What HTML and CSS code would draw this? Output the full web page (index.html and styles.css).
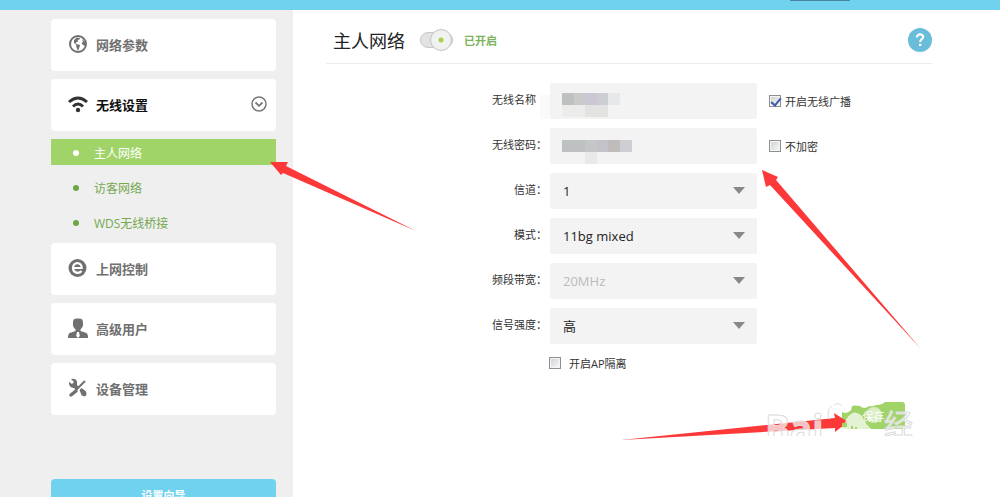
FILE: index.html
```
<!DOCTYPE html>
<html lang="zh-CN">
<head>
    <meta charset="UTF-8">
    <meta name="viewport" content="width=device-width, initial-scale=1.0">
    <title>主人网络</title>
    <link rel="stylesheet" href="styles.css">
</head>
<body>
<header class="topbar"><span class="topbar-tab"></span></header>
<div class="layout">
    <nav class="sidebar">
        <a class="menu-card" href="#network">
            <svg class="menu-icon" viewBox="0 0 20 20">
                <circle cx="10" cy="10" r="8" fill="none" stroke="#707070" stroke-width="2"/>
                <path fill="#707070" d="M6 6l3-2.500 3 .5-.5 1.500-2 .5 1 1.500-2 .5-1 1.500 1 .5 3.500 1-.5 2-1.500 4-1.500-3.500L8 10.500 6 9zM14 5l3 3v4l-2.500-1.500L13.500 9l1.500-1z"/>
            </svg>
            <span>网络参数</span>
        </a>
        <a class="menu-card current" href="#wireless">
            <svg class="menu-icon" viewBox="0 0 20 20">
                <path fill="none" stroke="#333" stroke-width="3" d="M1 8Q10 0 19 8"/>
                <path fill="none" stroke="#333" stroke-width="3" d="M5 12.500Q10 7.500 15 12.500"/>
                <circle cx="10" cy="16" r="2.200" fill="#333"/>
            </svg>
            <span>无线设置</span>
            <svg class="menu-toggle" viewBox="0 0 16 16">
                <circle cx="8" cy="8" r="7" fill="none" stroke="#777" stroke-width="1.500"/>
                <path fill="none" stroke="#777" stroke-width="1.800" d="M4.500 6.500L8 9.800l3.500-3.300"/>
            </svg>
        </a>
        <ul class="submenu">
            <li><a class="active" href="#host">主人网络</a></li>
            <li><a href="#guest">访客网络</a></li>
            <li><a href="#wds">WDS无线桥接</a></li>
        </ul>
        <a class="menu-card" href="#control">
            <svg class="menu-icon" viewBox="0 0 20 20">
                <circle cx="9.500" cy="10" r="9" fill="#707070"/>
                <path fill="none" stroke="#fff" stroke-width="2.200" d="M5.500 10H13.700C13.700 3.500 5 3.500 5 10C5 15.500 11 16 13.500 13"/>
            </svg>
            <span>上网控制</span>
        </a>
        <a class="menu-card" href="#advanced">
            <svg class="menu-icon" viewBox="0 0 20 20">
                <path fill="#707070" d="M5 5C5 1 6.500 .5 10 .5S15 1 15 5C15.500 9 13.500 10 12.500 11.500V13l6 2q1.500 1 1.500 5H0q0-4 1.500-5l6-2v-1.500C6.500 10 4.500 9 5 5z"/>
                <path fill="#fff" d="M9 14h2l.8 4L10 20l-1.800-2z"/>
            </svg>
            <span>高级用户</span>
        </a>
        <a class="menu-card" href="#device">
            <svg class="menu-icon" viewBox="0 0 20 20">
                <path fill="#707070" d="M3 1q4-1 6 2v4l2 2-3 3-2-2q-4 0-5-4V4l3 2 2-2zM11.500 12l2-2 4 3q2 3 0 5-2 1-4-1z"/>
                <path fill="none" stroke="#707070" stroke-width="3.500" stroke-linecap="round" d="M3 17l5-4"/>
                <path fill="none" stroke="#707070" stroke-width="2" d="M7 13L17 3"/>
            </svg>
            <span>设备管理</span>
        </a>
        <button class="wizard" type="button">设置向导</button>
    </nav>

    <main class="content">
        <div class="title-row">
            <h1>主人网络</h1>
            <label class="switch">
                <input type="checkbox" aria-label="主人网络" checked>
                <span>已开启</span>
            </label>
            <button class="help" type="button" aria-label="帮助">
                <svg viewBox="0 0 24 24">
                    <path fill="none" stroke="#fff" stroke-width="2.200" d="M8.900 9.500C8.700 5.500 15.500 5.500 15.200 9C15 11 12.200 11.200 12.200 14"/>
                    <path fill="#fff" d="M11 15.700h2.400V18H11z"/>
                </svg>
            </button>
        </div>

        <form class="settings">
            <div class="row">
                <label class="row-label plain" for="ssid">无线名称</label>
                <div class="field">
                    <input type="text" id="ssid" name="ssid">
                    <svg class="mask" viewBox="0 0 92 36">
                        <path fill="#fafafa" d="M0 12h10v24H0z"/>
                        <path fill="#bdc1bf" d="M22 10h12v12H22z"/>
                        <path fill="#cacaca" d="M34 10h11v12H34z"/>
                        <path fill="#cac6d4" d="M45 10h12v12H45z"/>
                        <path fill="#cdced2" d="M57 10h11v12H57z"/>
                        <path fill="#e6e8ea" d="M68 10h12v12H68z"/>
                        <path fill="#ececeb" d="M22 22h23v12H22z"/>
                        <path fill="#e3e3e1" d="M45 22h23v12H45z"/>
                    </svg>
                </div>
                <label class="check"><input type="checkbox" name="broadcast" checked>开启无线广播</label>
            </div>
            <div class="row">
                <label class="row-label" for="password">无线密码：</label>
                <div class="field">
                    <input type="text" id="password" name="password">
                    <svg class="mask" viewBox="0 0 92 36">
                        <path fill="#bdc1c1" d="M22 12h23v12H22z"/>
                        <path fill="#c4c6c8" d="M45 12h12v12H45z"/>
                        <path fill="#c2c2c8" d="M57 12h11v12H57z"/>
                        <path fill="#c0bcbc" d="M68 12h12v12H68z"/>
                        <path fill="#cdcfd4" d="M80 12h12v12H80z"/>
                        <path fill="#e9e9e9" d="M45 24h12v12H45z"/>
                    </svg>
                </div>
                <label class="check"><input type="checkbox" name="open">不加密</label>
            </div>
            <div class="row">
                <label class="row-label" for="channel">信道：</label>
                <div class="field select">
                    <select id="channel" name="channel"><option>1</option></select>
                </div>
            </div>
            <div class="row">
                <label class="row-label" for="mode">模式：</label>
                <div class="field select">
                    <select id="mode" name="mode"><option>11bg mixed</option></select>
                </div>
            </div>
            <div class="row">
                <label class="row-label" for="bandwidth">频段带宽：</label>
                <div class="field select">
                    <select id="bandwidth" name="bandwidth" disabled><option>20MHz</option></select>
                </div>
            </div>
            <div class="row">
                <label class="row-label" for="power">信号强度：</label>
                <div class="field select">
                    <select id="power" name="power"><option>高</option></select>
                </div>
            </div>
            <label class="check isolate"><input type="checkbox" name="isolate">开启AP隔离</label>
            <button class="save" type="submit">保存</button>
        </form>
    </main>
</div>

<svg class="overlay" width="1000" height="497" viewBox="0 0 1000 497">
    <defs>
        <clipPath id="mark-clip"><path d="M760 395h160v41H760z"/></clipPath>
    </defs>
    <g fill="#fc3838">
        <path d="M270 162L288 162L286 166L416 231L283 173L281 175z"/>
        <path d="M762 170L778 177L776 180L921 349L770 185L766 187z"/>
        <path d="M848 422L834 413L835 418L621 440L835 428L835 432z"/>
    </g>
    <g clip-path="url(#mark-clip)">
        <g class="mark">
            <text class="mark-latin" x="765" y="442">Bai</text>
            <text class="mark-han" x="884" y="436">经</text>
        </g>
        <g fill="#fff" fill-opacity=".7">
            <path d="M837 436Q843 428 847 418Q854 408 862 416Q866 426 875 432V436z"/>
            <circle cx="874" cy="415" r="8" fill-opacity=".6"/>
        </g>
        <path fill="#fff" d="M840 401h46q-3 4-10 4-4 2-7 1-5 4-9 0-5-1-8 0 0 7-8 7l-4-3z"/>
        <path fill="none" stroke="#ddd" d="M829 419q-3-9 3-13M834 405q5-3 8 1"/>
        <path fill="#a0d468" d="M842 423h5v4h-5zM851 426h2v3h-2zM855 427h2v2h-2z"/>
    </g>
</svg>
</body>
</html>
```
FILE: styles.css
```
* {
    box-sizing: border-box;
}

body {
    display: flex;
    flex-direction: column;
    height: 100vh;
    margin: 0;
    overflow: hidden;
    background-color: #fff;
    color: #333;
    font-family: "Open Sans", "Noto Sans CJK SC", sans-serif;
    font-size: 11px;
}

a {
    color: inherit;
    text-decoration: none;
}

button,
input,
select {
    margin: 0;
    border: none;
    font-family: inherit;
}

.topbar {
    flex: none;
    height: 10px;
    padding-right: 150px;
    background-color: #70d2ef;
}

.topbar-tab {
    display: block;
    width: 60px;
    height: 1px;
    margin-left: auto;
    background-color: #4a86a3;
}

.layout {
    display: flex;
    flex: 1;
}

/* left menu */
.sidebar {
    display: flex;
    flex: none;
    flex-direction: column;
    gap: 8px;
    width: 293px;
    padding: 9px 17px 0 51px;
    background-color: #efefef;
}

.menu-card {
    display: flex;
    flex: none;
    align-items: center;
    gap: 8px;
    height: 52px;
    padding: 0 9px 2px 17px;
    border-radius: 4px;
    background-color: #fff;
    color: #707070;
    font-size: 13px;
    font-weight: bold;
}

.menu-card.current {
    color: #111;
}

.menu-icon {
    width: 20px;
    height: 20px;
}

.menu-toggle {
    width: 16px;
    height: 16px;
    margin-left: auto;
}

.submenu {
    display: flex;
    flex-direction: column;
    gap: 9px;
    margin: 0;
    padding: 0;
    list-style: none;
}

.submenu a {
    display: flex;
    align-items: center;
    gap: 15px;
    height: 26px;
    padding: 2px 0 0 22px;
    color: #76a94f;
    font-size: 12px;
}

.submenu a::before {
    content: "";
    width: 6px;
    height: 6px;
    border-radius: 50%;
    background-color: #6fa644;
}

.submenu a.active {
    background-color: #a0d468;
    color: #fff;
}

.submenu a.active::before {
    background-color: #fff;
}

.wizard {
    flex: none;
    height: 32px;
    margin-top: 56px;
    border-radius: 4px;
    background-color: #70d2ef;
    color: #fff;
    font-size: 11px;
    font-weight: bold;
}

/* right part */
.content {
    flex: 1;
    padding: 0 68px 0 33px;
}

.title-row {
    display: flex;
    align-items: center;
    height: 54px;
    padding: 6px 0 0 7px;
    border-bottom: 1px solid #ececec;
}

h1 {
    margin: 0 15px 0 0;
    color: #222;
    font-size: 18px;
    font-weight: normal;
}

.switch {
    display: flex;
    align-items: center;
    gap: 11px;
    color: #7db35b;
    font-weight: bold;
}

.switch input {
    display: flex;
    align-items: center;
    justify-content: flex-end;
    width: 33px;
    height: 16px;
    border: 1px solid #c8c8c8;
    border-radius: 8px;
    appearance: none;
    background-color: #e2e2e2;
}

.switch input::before {
    content: "";
    flex: none;
    width: 20px;
    height: 20px;
    border: 1px solid #c4c4c4;
    border-radius: 50%;
    background: radial-gradient(circle, #a8d04c 2px, #f1f1f1 3px);
}

.help {
    width: 24px;
    height: 24px;
    margin-left: auto;
    padding: 0;
    border-radius: 50%;
    background-color: #69bddb;
}

.help svg {
    display: block;
}

.settings {
    display: flex;
    flex-direction: column;
    gap: 9px;
    padding-top: 19px;
}

.row {
    display: flex;
    align-items: center;
}

.row-label {
    width: 221px;
    padding-bottom: 4px;
    text-align: right;
}

.row-label.plain {
    padding-right: 11px;
}

.field {
    position: relative;
    width: 207px;
    height: 36px;
    margin: 0 12px 0 3px;
}

.field input,
.field select {
    width: 100%;
    height: 100%;
    padding: 0 30px 0 13px;
    border-radius: 2px;
    appearance: none;
    background-color: #f3f3f3;
    color: #222;
    font-size: 13px;
    opacity: 1;
}

.field select:disabled {
    color: #bbb;
}

.select::after {
    content: "";
    position: absolute;
    top: 14px;
    right: 12px;
    border: 6px solid transparent;
    border-top: 7px solid #888;
    border-bottom: none;
    pointer-events: none;
}

.mask {
    position: absolute;
    top: 0;
    left: -10px;
    width: 92px;
    height: 36px;
}

.check {
    display: flex;
    align-items: center;
    gap: 4px;
}

.check input {
    width: 12px;
    height: 12px;
    border: 1px solid #8e8f8f;
    appearance: none;
    background: linear-gradient(135deg, #ccd0d5, #fafafa);
    box-shadow: inset 0 0 0 1px #f4f4f4;
}

.check input:checked::before {
    content: "";
    display: block;
    width: 4px;
    height: 8px;
    margin: 0 3px;
    border: solid #3f5aa6;
    border-width: 0 2px 2px 0;
    transform: rotate(40deg);
}

.isolate {
    gap: 8px;
    height: 20px;
    padding-left: 223px;
}

.save {
    align-self: flex-end;
    width: 63px;
    height: 27px;
    margin: 20px 27px 0 0;
    border-radius: 3px;
    background-color: #a0d468;
    color: #fff;
    font-size: 11px;
}

/* arrows and watermark */
.overlay {
    position: absolute;
    top: 0;
    left: 0;
    pointer-events: none;
}

.mark {
    fill: #fff;
    fill-opacity: .7;
    stroke: #dcdcdc;
    stroke-width: 1px;
}

.mark-latin {
    font-family: "Open Sans", sans-serif;
    font-size: 37px;
    font-weight: bold;
}

.mark-han {
    font-family: "Noto Sans CJK SC", sans-serif;
    font-size: 29px;
}
```
